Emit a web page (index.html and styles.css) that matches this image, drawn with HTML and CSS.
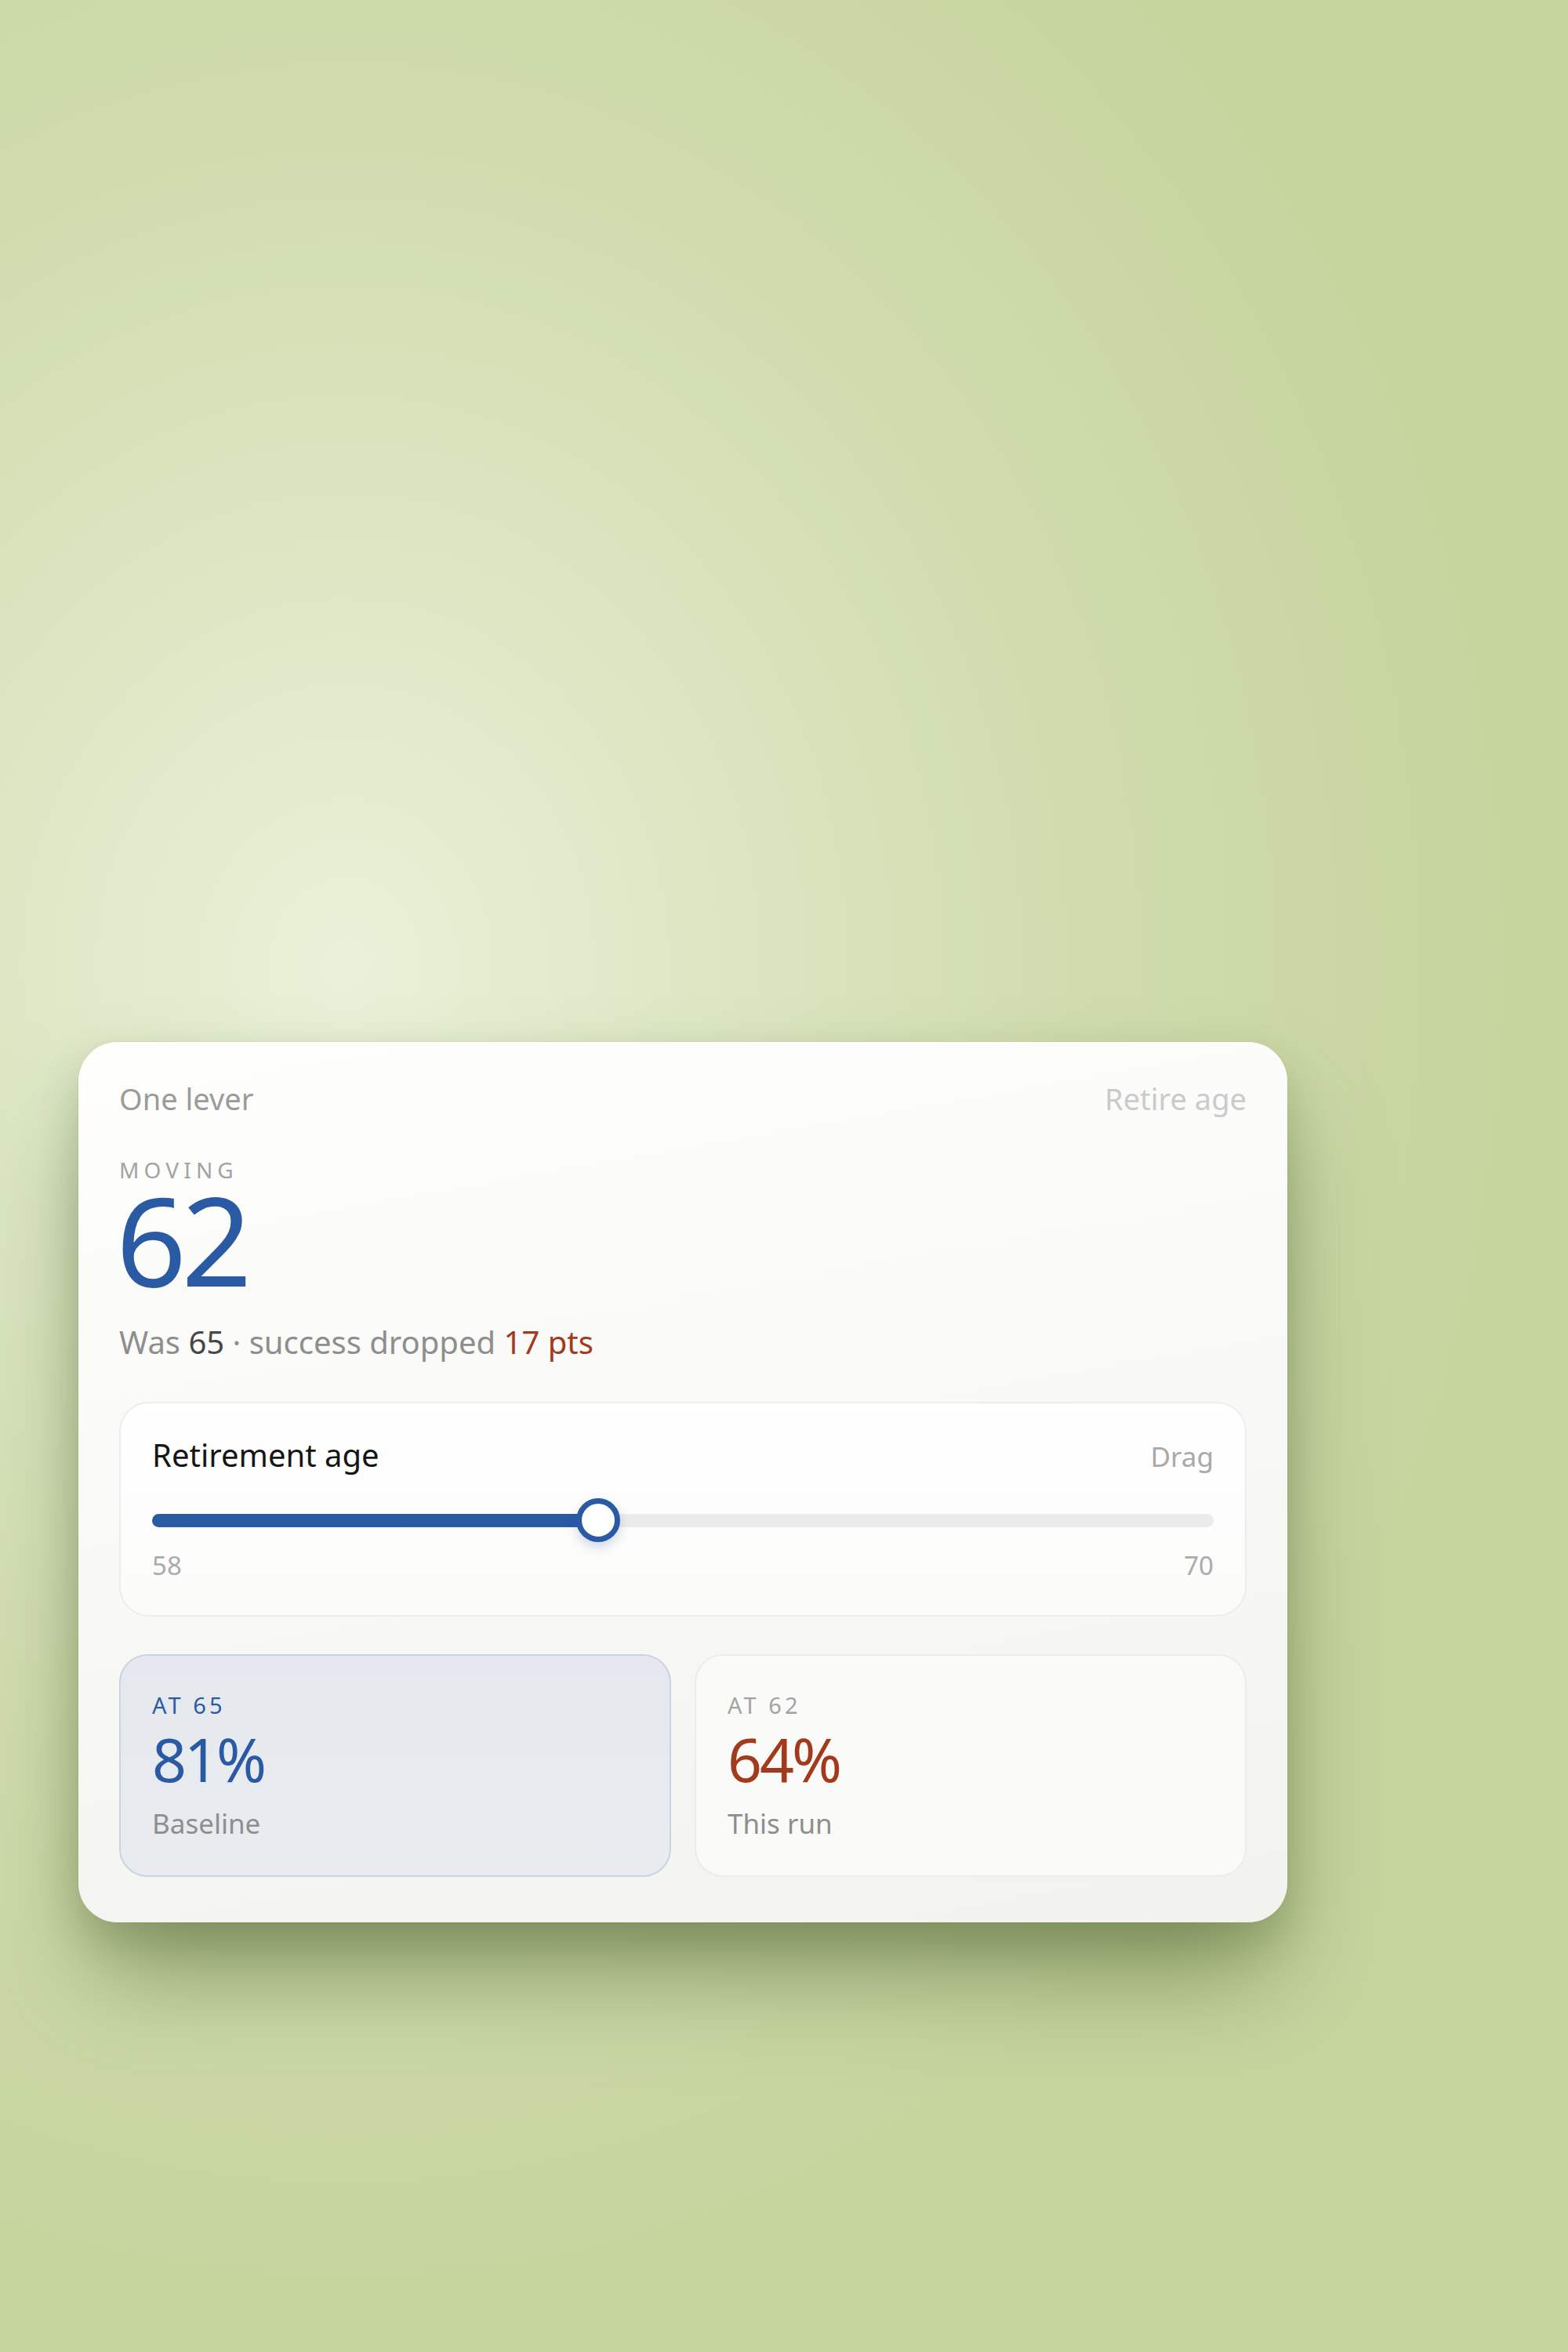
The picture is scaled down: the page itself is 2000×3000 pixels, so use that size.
FILE: index.html
```
<!DOCTYPE html>
<html lang="en">
<head>
<meta charset="utf-8">
<title>One lever</title>
<link rel="stylesheet" href="styles.css">
</head>
<body>
<main class="stage">
  <section class="card">
    <header class="card-head">
      <span class="eyebrow">One lever</span>
      <span class="tag">Retire age</span>
    </header>
    <div class="label-caps">MOVING</div>
    <div class="big-value">62</div>
    <p class="summary"><span>Was </span><span class="was">65</span><span> · success dropped </span><span class="drop">17 pts</span></p>

    <div class="panel">
      <div class="panel-head">
        <span class="panel-title">Retirement age</span>
        <span class="panel-hint">Drag</span>
      </div>
      <div class="slider">
        <div class="track">
          <div class="fill" style="width: 42%"></div>
          <div class="thumb" style="left: 42%"></div>
        </div>
      </div>
      <div class="range">
        <span>58</span>
        <span>70</span>
      </div>
    </div>

    <div class="stats">
      <div class="stat stat-base">
        <div class="stat-label">AT 65</div>
        <div class="stat-value">81%</div>
        <div class="stat-note">Baseline</div>
      </div>
      <div class="stat stat-run">
        <div class="stat-label">AT 62</div>
        <div class="stat-value">64%</div>
        <div class="stat-note">This run</div>
      </div>
    </div>
  </section>
</main>
</body>
</html>
```
FILE: styles.css
```
html, body {
  margin: 0;
  padding: 0;
}

body {
  width: 2000px;
  min-height: 3000px;
  font-family: "Noto Sans", "Open Sans", sans-serif;
  background:
    radial-gradient(ellipse 1500px 1700px at 22% 41%, #eaf1d9 0%, #dde7c4 30%, #d0dcae 62%, #c6d49e 100%),
    #c8d6a2;
}

.stage {
  box-sizing: border-box;
  padding: 1329px 0 0 100px;
  min-height: 3000px;
}

.card {
  box-sizing: border-box;
  width: 1542px;
  padding: 52px 52px 58px;
  border-radius: 50px;
  background: linear-gradient(170deg, #fefefc 0%, #f9f9f7 45%, #f2f3ee 100%);
  box-shadow:
    0 80px 130px -20px rgba(75, 95, 45, 0.55),
    0 24px 50px rgba(75, 95, 45, 0.22),
    0 0 0 1px rgba(120, 140, 90, 0.08);
}

.card-head {
  display: flex;
  justify-content: space-between;
  align-items: baseline;
  font-size: 38px;
  line-height: 1.1;
}

.eyebrow {
  color: #9b9b9b;
}

.tag {
  color: #cbcbcb;
}

.label-caps {
  margin-top: 55px;
  font-size: 28px;
  line-height: 1;
  letter-spacing: 0.22em;
  color: #a3a3a3;
}

.big-value {
  margin-top: 8px;
  font-size: 157px;
  line-height: 0.85;
  letter-spacing: -0.04em;
  color: #2a5aa3;
  margin-left: -4px;
}

.summary {
  margin: 41px 0 0;
  font-size: 40px;
  line-height: 1.2;
  color: #8e8e8e;
}

.was {
  color: #474747;
}

.drop {
  color: #a23a1b;
}

.panel {
  box-sizing: border-box;
  margin-top: 52px;
  padding: 42px 40px 43px;
  border: 2px solid #ededeb;
  border-radius: 38px;
  background: linear-gradient(180deg, #ffffff 0%, #fbfbfa 100%);
}

.panel-head {
  display: flex;
  justify-content: space-between;
  align-items: baseline;
  line-height: 1.2;
}

.panel-title {
  font-size: 40px;
  color: #161616;
}

.panel-hint {
  font-size: 35px;
  color: #a9a9a9;
}

.slider {
  margin-top: 31px;
  height: 56px;
  display: flex;
  align-items: center;
}

.track {
  position: relative;
  flex: 1;
  height: 17px;
  border-radius: 9px;
  background: #ebebeb;
}

.fill {
  height: 100%;
  border-radius: 9px;
  background: #2a5aa3;
}

.thumb {
  position: absolute;
  top: 50%;
  width: 56px;
  height: 56px;
  box-sizing: border-box;
  border: 7px solid #2a5aa3;
  border-radius: 50%;
  background: #ffffff;
  transform: translate(-50%, -50%);
  box-shadow: 0 6px 14px rgba(42, 90, 163, 0.22);
}

.range {
  margin-top: 10px;
  display: flex;
  justify-content: space-between;
  font-size: 33px;
  line-height: 1.2;
  color: #ababab;
}

.stats {
  margin-top: 48px;
  display: grid;
  grid-template-columns: 1fr 1fr;
  gap: 30px;
}

.stat {
  box-sizing: border-box;
  padding: 46px 40px 45px;
  border-radius: 36px;
  border: 2px solid #ececea;
}

.stat-base {
  background: linear-gradient(180deg, #e5e9ef 0%, #e9ecef 100%);
  border-color: #c8d4e4;
}

.stat-run {
  background: #fafaf8;
}

.stat-label {
  font-size: 29px;
  line-height: 1.2;
  letter-spacing: 0.14em;
  color: #a3a3a3;
}

.stat-base .stat-label {
  color: #2a5aa3;
}

.stat-value {
  margin-top: 12px;
  font-size: 77px;
  line-height: 1;
  letter-spacing: -0.04em;
  color: #2a5aa3;
}

.stat-run .stat-value {
  color: #a23a1b;
}

.stat-note {
  margin-top: 23px;
  font-size: 35px;
  line-height: 1.2;
  color: #8e8e8e;
}
```
